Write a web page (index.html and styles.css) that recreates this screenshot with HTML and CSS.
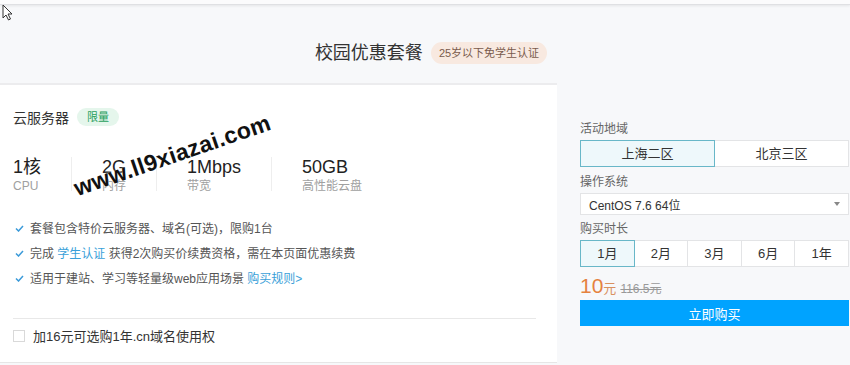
FILE: index.html
```html
<!DOCTYPE html>
<html lang="zh">
<head>
<meta charset="utf-8">
<title>校园优惠套餐</title>
<link rel="stylesheet" href="styles.css">
</head>
<body>
<div class="topbar"></div>
<svg class="cursor" width="12" height="18" viewBox="0 0 12 18"><path d="M1 1 L1 14 L4 11 L6.5 16 L8.5 15 L6 10 L10 10 Z" fill="#fff" stroke="#333" stroke-width="1" stroke-linejoin="round"/></svg>
<header class="hero">
  <h1 class="hero-title">校园优惠套餐</h1>
  <span class="hero-badge">25岁以下免学生认证</span>
</header>
<main class="main">
  <section class="left">
    <div class="left-body">
      <div class="prod-head">
        <span class="prod-name">云服务器</span>
        <span class="tag-green">限量</span>
      </div>
      <div class="specs">
        <div class="spec"><div class="spec-val">1核</div><div class="spec-label">CPU</div></div>
        <div class="spec"><div class="spec-val">2G</div><div class="spec-label">内存</div></div>
        <div class="spec"><div class="spec-val">1Mbps</div><div class="spec-label">带宽</div></div>
        <div class="spec"><div class="spec-val">50GB</div><div class="spec-label">高性能云盘</div></div>
      </div>
      <ul class="feats">
        <li><svg class="chk" width="9" height="7" viewBox="0 0 9 7"><path d="M1 3.5 L3.5 6 L8 1" fill="none" stroke="#3a9ad9" stroke-width="1.5"/></svg>套餐包含特价云服务器、域名(可选)，限购1台</li>
        <li><svg class="chk" width="9" height="7" viewBox="0 0 9 7"><path d="M1 3.5 L3.5 6 L8 1" fill="none" stroke="#3a9ad9" stroke-width="1.5"/></svg>完成 <a class="lnk">学生认证</a> 获得2次购买价续费资格，需在本页面优惠续费</li>
        <li><svg class="chk" width="9" height="7" viewBox="0 0 9 7"><path d="M1 3.5 L3.5 6 L8 1" fill="none" stroke="#3a9ad9" stroke-width="1.5"/></svg>适用于建站、学习等轻量级web应用场景 <a class="lnk">购买规则&gt;</a></li>
      </ul>
    </div>
    <div class="addon">
      <span class="cbox"></span>
      <span class="addon-text">加16元可选购1年.cn域名使用权</span>
    </div>
    <div class="watermark">www.ll9xiazai.com</div>
  </section>
  <aside class="right">
    <div class="field-label">活动地域</div>
    <div class="seg seg-2">
      <div class="seg-item on">上海二区</div>
      <div class="seg-item">北京三区</div>
    </div>
    <div class="field-label">操作系统</div>
    <div class="select"><span>CentOS 7.6 64位</span><span class="caret"></span></div>
    <div class="field-label">购买时长</div>
    <div class="seg seg-5">
      <div class="seg-item on">1月</div>
      <div class="seg-item">2月</div>
      <div class="seg-item">3月</div>
      <div class="seg-item">6月</div>
      <div class="seg-item">1年</div>
    </div>
    <div class="price"><span class="price-num">10</span><span class="price-unit">元</span><span class="price-old">116.5元</span></div>
    <button class="buy">立即购买</button>
  </aside>
</main>
</body>
</html>
```
FILE: styles.css
```css
* { box-sizing: border-box; }
html, body { margin: 0; padding: 0; }
body {
  width: 850px;
  height: 365px;
  overflow: hidden;
  background: #f7f8fa;
  font-family: "Liberation Sans", "Noto Sans CJK SC", sans-serif;
  color: #333;
  position: relative;
}
.topbar {
  height: 5px;
  background: #fbfbfc;
  border-bottom: 1px solid #dfe0e3;
  box-shadow: 0 1px 3px rgba(0,0,0,0.08);
}
.cursor { position: absolute; left: 2px; top: 4px; }
.hero {
  height: 78px;
  display: flex;
  align-items: center;
  justify-content: center;
  gap: 8px;
  padding: 18px 0 0 12px;
}
.hero-title {
  margin: 0;
  font-size: 18px;
  font-weight: normal;
  color: #333;
  line-height: 24px;
}
.hero-badge {
  height: 22px;
  line-height: 22px;
  padding: 0 8px;
  border-radius: 11px;
  background: #f8e9e0;
  color: #7a5b4c;
  font-size: 11px;
}
.main { display: flex; align-items: flex-start; }
.left {
  position: relative;
  width: 557px;
  background: #fff;
  border-top: 2px solid #ececee;
  border-bottom: 1px solid #e6e6e6;
}
.left-body { padding: 22px 21px 0 13px; }
.left-body::after {
  content: "";
  display: block;
  margin-top: 26px;
  border-bottom: 1px solid #e8e8e8;
}
.prod-head { display: flex; align-items: center; gap: 8px; height: 20px; }
.prod-name { font-size: 14px; color: #333; }
.tag-green {
  height: 18px;
  line-height: 18px;
  padding: 0 10px;
  border-radius: 9px;
  background: #e5f6ec;
  color: #29a05d;
  font-size: 11px;
}
.specs { display: flex; margin-top: 30px; }
.spec { padding: 0 30px; border-left: 1px solid #eeeeee; height: 34px; }
.spec:first-child { padding-left: 0; border-left: 0; }
.spec-val { font-size: 18px; line-height: 20px; color: #222; }
.spec-label { font-size: 12px; line-height: 14px; color: #a0a0a0; margin-top: 2px; }
.feats { list-style: none; margin: 26px 0 0; padding: 0 0 0 2px; }
.feats li { height: 25px; line-height: 25px; font-size: 12px; color: #555; white-space: nowrap; }
.chk { margin-right: 6px; vertical-align: middle; position: relative; top: -1px; }
.lnk { color: #3a9fd9; text-decoration: none; }
.addon { display: flex; align-items: center; height: 33px; padding: 0 13px 0 13px; margin-bottom: 10px; }
.cbox { width: 12px; height: 12px; border: 1px solid #d9d9d9; background: #fff; margin-right: 8px; }
.addon-text { font-size: 13px; color: #333; }
.watermark {
  position: absolute;
  left: 79px;
  top: 90px;
  font-family: "Liberation Sans", sans-serif;
  font-weight: bold;
  font-size: 23px;
  line-height: 26px;
  color: #111;
  letter-spacing: 0.3px;
  transform: rotate(-19deg);
  transform-origin: left bottom;
  white-space: nowrap;
  text-shadow: 0 0 2px #fff;
  pointer-events: none;
}
.right { flex: 1; padding: 38px 1px 0 23px; }
.field-label { font-size: 12px; line-height: 16px; color: #666; margin-bottom: 3px; }
.seg { display: flex; margin-bottom: 7px; }
.seg-item {
  flex: 1;
  height: 27px;
  line-height: 25px;
  text-align: center;
  background: #fff;
  border: 1px solid #e3e4e6;
  margin-left: -1px;
  font-size: 13px;
  color: #333;
}
.seg-item:first-child { margin-left: 0; }
.seg-item.on { background: #eef8fb; border-color: #68b7c8; position: relative; z-index: 1; }
.select {
  height: 22px;
  background: #fff;
  border: 1px solid #e3e4e6;
  display: flex;
  align-items: center;
  justify-content: space-between;
  padding: 0 8px;
  font-size: 12px;
  color: #333;
  margin-bottom: 6px;
}
.caret {
  width: 0; height: 0;
  border-left: 3px solid transparent;
  border-right: 3px solid transparent;
  border-top: 4px solid #888;
}
.price { height: 24px; display: flex; align-items: baseline; margin-top: 4px; }
.price-num { font-size: 21px; color: #e5823f; line-height: 24px; }
.price-unit { font-size: 13px; color: #d9905f; }
.price-old { font-size: 12px; color: #999; text-decoration: line-through; margin-left: 4px; }
.buy {
  display: block;
  width: 100%;
  height: 26px;
  margin-top: 2px;
  border: 0;
  background: #00a3ff;
  color: #fff;
  font-family: inherit;
  font-size: 13px;
  padding: 0;
}
```
